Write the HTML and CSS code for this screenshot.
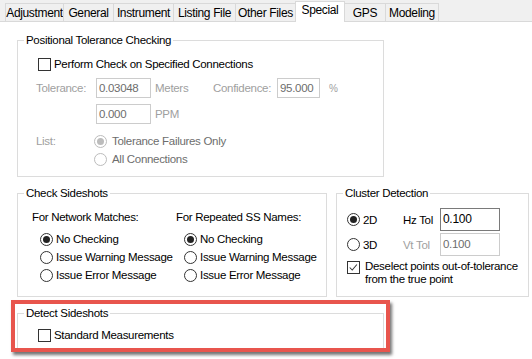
FILE: index.html
```html
<!DOCTYPE html>
<html>
<head>
<meta charset="utf-8">
<link rel="stylesheet" href="styles.css">
</head>
<body>
<div class="window">
  <div class="tabs">
    <div class="tab t-adj">Adjustment</div>
    <div class="tab t-gen">General</div>
    <div class="tab t-ins">Instrument</div>
    <div class="tab t-lst">Listing File</div>
    <div class="tab t-oth">Other Files</div>
    <div class="tab t-spc active">Special</div>
    <div class="tab t-gps">GPS</div>
    <div class="tab t-mod">Modeling</div>
  </div>

  <div class="page">
    <fieldset class="group g-pos">
      <legend>Positional Tolerance Checking</legend>
      <div class="pos-body">
        <div class="row r1">
          <span class="checkbox"></span><span class="ctext">Perform Check on Specified Connections</span>
        </div>
        <div class="row r2">
          <span class="lbl dis c-lbl">Tolerance:</span>
          <span class="field dis c-in1">0.03048</span>
          <span class="lbl dis c-unit">Meters</span>
          <span class="lbl dis c-conf">Confidence:</span>
          <span class="field dis c-in2">95.000</span>
          <span class="lbl dis c-pct">%</span>
        </div>
        <div class="row r3">
          <span class="c-lbl"></span>
          <span class="field dis c-in1">0.000</span>
          <span class="lbl dis c-unit">PPM</span>
        </div>
        <div class="row r4">
          <span class="lbl dis c-list">List:</span>
          <span class="radio dis on"></span><span class="rtext dis2">Tolerance Failures Only</span>
        </div>
        <div class="row r5">
          <span class="c-list"></span>
          <span class="radio dis"></span><span class="rtext dis2">All Connections</span>
        </div>
      </div>
    </fieldset>

    <div class="mid">
      <fieldset class="group g-check">
        <legend>Check Sideshots</legend>
        <div class="check-body">
          <div class="col col1">
            <div class="head">For Network Matches:</div>
            <div class="opt"><span class="radio on"></span><span class="rtext">No Checking</span></div>
            <div class="opt"><span class="radio"></span><span class="rtext">Issue Warning Message</span></div>
            <div class="opt"><span class="radio"></span><span class="rtext">Issue Error Message</span></div>
          </div>
          <div class="col col2">
            <div class="head">For Repeated SS Names:</div>
            <div class="opt"><span class="radio on"></span><span class="rtext">No Checking</span></div>
            <div class="opt"><span class="radio"></span><span class="rtext">Issue Warning Message</span></div>
            <div class="opt"><span class="radio"></span><span class="rtext">Issue Error Message</span></div>
          </div>
        </div>
      </fieldset>

      <fieldset class="group g-cluster">
        <legend>Cluster Detection</legend>
        <div class="cluster-body">
          <div class="crow crow1">
            <span class="c-dim"><span class="radio on"></span><span class="rtext">2D</span></span>
            <span class="c-tol">Hz Tol</span>
            <span class="field act c-tin">0.100</span>
          </div>
          <div class="crow crow2">
            <span class="c-dim"><span class="radio"></span><span class="rtext">3D</span></span>
            <span class="c-tol dis">Vt Tol</span>
            <span class="field dis c-tin">0.100</span>
          </div>
          <div class="crow3">
            <span class="checkbox checked"><svg viewBox="0 0 13 13" width="11" height="11"><polyline points="2,6.5 5,9.5 10.5,3" fill="none" stroke="#333" stroke-width="1.2"/></svg></span>
            <span class="wrap-text">Deselect points out-of-tolerance<br>from the true point</span>
          </div>
        </div>
      </fieldset>
    </div>

    <fieldset class="group g-detect">
      <legend>Detect Sideshots</legend>
      <div class="detect-body">
        <div class="row">
          <span class="checkbox"></span><span class="ctext2">Standard Measurements</span>
        </div>
      </div>
    </fieldset>
  </div>

  <div class="highlight"></div>
</div>
</body>
</html>
```

FILE: styles.css
```css
* { box-sizing: border-box; }
html, body { margin: 0; padding: 0; }
body {
  width: 532px;
  height: 359px;
  overflow: hidden;
  background: #ffffff;
  font-family: "Liberation Sans", Arial, sans-serif;
  font-size: 11.5px;
  letter-spacing: -0.3px;
  color: #000;
}
.window {
  position: relative;
  width: 532px;
  height: 359px;
}

/* Tabs */
.tabs {
  display: flex;
  align-items: flex-end;
  height: 22px;
  padding-left: 5px;
  background: #f0f0f0;
  border-bottom: 1px solid #d9d9d9;
}
.tab {
  flex: none;
  height: 18px;
  line-height: 18px;
  text-align: center;
  border-top: 1px solid #d9d9d9;
  border-left: 1px solid #d9d9d9;
  background: #f0f0f0;
  white-space: nowrap;
  font-size: 12px;
  letter-spacing: -0.35px;
}
.tab.active {
  height: 21px;
  line-height: 16px;
  margin-bottom: -1px;
  background: #fff;
  border-right: 1px solid #d9d9d9;
}
.t-adj { width: 58px; }
.t-gen { width: 50px; }
.t-ins { width: 60px; }
.t-lst { width: 62px; }
.t-oth { width: 60px; }
.t-spc { width: 50px; }
.t-gps { width: 40px; border-left: 0 !important; }
.t-mod { width: 54px; border-right: 1px solid #d9d9d9; }

/* Page */
.page {
  display: flex;
  flex-direction: column;
  padding: 11px 0 0 17px;
}
.group {
  margin: 0;
  padding: 0;
  border: 1px solid #dcdcdc;
  min-width: 0;
}
.group legend {
  margin-left: 6px;
  padding: 0 2px;
  line-height: 15px;
  height: 15px;
  white-space: nowrap;
}
.g-pos { width: 367px; height: 144px; }
.mid {
  display: flex;
  gap: 9px;
  margin-top: 9px;
}
.g-check { width: 310px; height: 111px; }
.g-cluster { width: 193px; height: 111px; }
.g-detect { width: 367px; height: 45px; margin-top: 9px; }

.row { display: flex; align-items: center; }
.lbl, .ctext, .rtext, .head, .c-tol, .ctext2 { white-space: nowrap; }
.dis { color: #a0a0a0; }
.dis2 { color: #6d6d6d; }

/* Controls */
.checkbox {
  flex: none;
  width: 13px;
  height: 13px;
  border: 1px solid #333;
  background: #fff;
  display: inline-flex;
  align-items: center;
  justify-content: center;
}
.radio {
  flex: none;
  width: 13px;
  height: 13px;
  border: 1px solid #333;
  border-radius: 50%;
  background: #fff;
  display: inline-flex;
  align-items: center;
  justify-content: center;
}
.radio.on::after {
  content: "";
  width: 7px;
  height: 7px;
  border-radius: 50%;
  background: #222;
}
.radio.dis { border-color: #bcbcbc; }
.radio.dis.on::after { background: #bcbcbc; }
.field {
  flex: none;
  height: 20px;
  line-height: 18px;
  padding-left: 2px;
  border: 1px solid #cccccc;
  background: #fff;
  color: #6d6d6d;
  white-space: nowrap;
}
.field.act { border-color: #7a7a7a; color: #000; font-size: 12px; }

/* Positional body */
.pos-body {
  display: flex;
  flex-direction: column;
  padding: 8px 0 0 18px;
}
.r1 { height: 16px; padding-left: 2px; }
.r1 .ctext { margin-left: 3px; }
.r2 { height: 20px; margin-top: 6px; }
.r3 { height: 20px; margin-top: 6px; }
.r4 { height: 16px; margin-top: 9px; }
.r5 { height: 16px; margin-top: 2px; }
.c-lbl { width: 60px; }
.c-in1 { width: 55px; }
.c-unit { width: 62px; padding-left: 4px; }
.c-conf { width: 64px; }
.c-in2 { width: 43px; }
.c-pct { margin-left: 9px; font-size: 10px; }
.c-list { width: 58px; }
.r4 .rtext, .r5 .rtext { margin-left: 5px; }

/* Check sideshots */
.check-body {
  display: flex;
  padding: 8px 0 0 14px;
}
.col { display: flex; flex-direction: column; }
.col1 { width: 144px; }
.head { height: 16px; line-height: 16px; }
.opt {
  display: flex;
  align-items: center;
  height: 18px;
  padding-left: 8px;
}
.col .opt:nth-child(2) { margin-top: 5px; }
.opt .rtext { margin-left: 3px; }

/* Cluster */
.cluster-body {
  display: flex;
  flex-direction: column;
  padding: 7px 0 0 10px;
}
.crow {
  display: flex;
  align-items: center;
  height: 23px;
}
.crow2 { margin-top: 2px; }
.crow .field { height: 23px; line-height: 21px; }
.c-dim { display: flex; align-items: center; width: 56px; }
.c-dim .rtext { margin-left: 3px; }
.c-tol { width: 37px; }
.c-tin { width: 60px; }
.crow3 {
  display: flex;
  align-items: flex-start;
  margin-top: 4px;
}
.crow3 .checkbox { margin-top: 1px; }
.wrap-text { margin-left: 5px; line-height: 13px; white-space: nowrap; }

/* Detect */
.detect-body { padding: 6px 0 0 20px; }
.detect-body .row { height: 16px; }
.ctext2 { margin-left: 3px; }

/* Annotation highlight */
.highlight {
  position: absolute;
  left: 11px;
  top: 300px;
  width: 379px;
  height: 52px;
  border: 4px solid #e8554d;
  box-shadow: 2px 3px 3px rgba(0, 0, 0, 0.55);
}
```
